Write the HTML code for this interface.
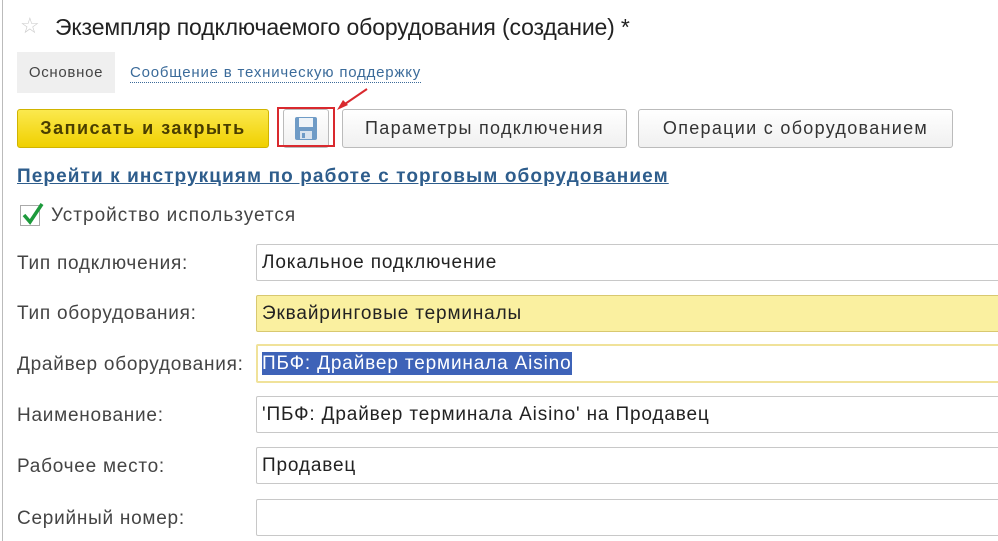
<!DOCTYPE html><html><head><meta charset="utf-8"><style>
body{margin:0;width:998px;height:541px;background:#fff;font-family:"Liberation Sans",sans-serif;position:relative;overflow:hidden;color:#333}
.a{position:absolute;white-space:nowrap}
.f{position:absolute;left:256px;width:760px;height:37px;border:1px solid #c8c8c8;border-radius:2px;box-sizing:border-box;font-size:19px;letter-spacing:0.85px;line-height:36px;padding-left:5px;color:#222}
.l{position:absolute;left:17px;font-size:19px;letter-spacing:0.75px;color:#444}
.b{position:absolute;top:109px;height:39px;border:1px solid #bbb;border-radius:3px;box-sizing:border-box;background:linear-gradient(#fff,#f0f0f0);font-size:18px;letter-spacing:1.3px;text-align:center;line-height:37px;color:#333}
</style></head><body>
<div class="a" style="left:2px;top:0;width:1px;height:541px;background:#bbb"></div>
<div class="a" style="left:20px;top:13px;font-size:22px;color:#ccc">☆</div>
<div class="a" style="left:55px;top:14px;font-size:23px;letter-spacing:-0.15px;color:#222">Экземпляр подключаемого оборудования (создание) *</div>
<div class="a" style="left:17px;top:52px;width:98px;height:41px;background:#efefef;font-size:15px;letter-spacing:0.7px;line-height:41px;text-align:center;color:#444">Основное</div>
<div class="a" style="left:130px;top:64px;font-size:15px;letter-spacing:0.8px;color:#3b6b9a;border-bottom:1px dotted #3b6b9a;line-height:18px">Сообщение в техническую поддержку</div>
<div class="b" style="left:17px;width:252px;background:linear-gradient(#fbe94e,#f0d000);border-color:#d0b400;font-weight:bold;letter-spacing:1.5px;color:#4a3e00">Записать и закрыть</div>
<div class="b" style="left:283px;width:46px"></div>
<svg class="a" style="left:294px;top:116px" width="24" height="25" viewBox="0 0 24 25"><rect x="1" y="1" width="22" height="23" rx="2" fill="#6f9bc6"/><rect x="5" y="2" width="14" height="9" fill="#eef3f8"/><rect x="6" y="15" width="12" height="8" fill="#d9e3ee"/><rect x="8" y="17" width="3" height="5" fill="#6f9bc6"/></svg>
<div class="a" style="left:277px;top:107px;width:58px;height:40px;border:2px solid #d9292e;box-sizing:border-box"></div>
<svg class="a" style="left:334px;top:86px" width="36" height="26"><line x1="33" y1="3" x2="8" y2="20" stroke="#d9292e" stroke-width="2"/><polygon points="3,24 14,19 9,14" fill="#d9292e"/></svg>
<div class="b" style="left:342px;width:285px">Параметры подключения</div>
<div class="b" style="left:638px;width:315px">Операции с оборудованием</div>
<div class="a" style="left:17px;top:166px;font-size:19px;letter-spacing:1.1px;font-weight:bold;color:#2e5d8c;text-decoration:underline">Перейти к инструкциям по работе с торговым оборудованием</div>
<div class="a" style="left:20px;top:205px;width:20px;height:21px;border:1px solid #aaa;box-sizing:border-box;background:#fff"></div>
<svg class="a" style="left:20px;top:200px" width="24" height="26"><path d="M4 15 L10 22 L22 4" stroke="#1d9a3c" stroke-width="3.5" fill="none"/></svg>
<div class="a" style="left:51px;top:205px;font-size:19px;letter-spacing:1px;color:#444">Устройство используется</div>
<div class="l" style="top:253px">Тип подключения:</div>
<div class="f" style="top:244px">Локальное подключение</div>
<div class="l" style="top:303px">Тип оборудования:</div>
<div class="f" style="top:295px;background:#faf0a0;border-color:#d8c870">Эквайринговые терминалы</div>
<div class="l" style="top:354px">Драйвер оборудования:</div>
<div class="f" style="top:344px;height:39px;border:2px solid #f0e29a;line-height:35px;padding-left:4px"><span style="background:#3e63b8;color:#fff;line-height:23px;display:inline-block">ПБФ: Драйвер терминала Aisino</span></div>
<div class="l" style="top:405px">Наименование:</div>
<div class="f" style="top:396px">'ПБФ: Драйвер терминала Aisino' на Продавец</div>
<div class="l" style="top:456px">Рабочее место:</div>
<div class="f" style="top:447px">Продавец</div>
<div class="l" style="top:508px">Серийный номер:</div>
<div class="f" style="top:499px"></div>
</body></html>
